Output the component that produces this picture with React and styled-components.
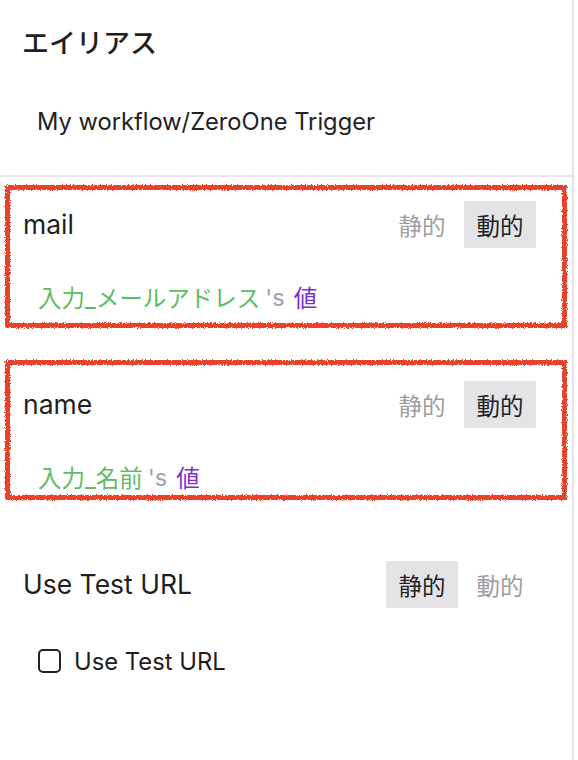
import styled, { createGlobalStyle } from 'styled-components';

// Global page reset
const GlobalStyle = createGlobalStyle`
    html, body {
        margin: 0;
        padding: 0;
        background: #ffffff;
    }
    body {
        font-family: Inter, "Noto Sans CJK JP", "Noto Sans", sans-serif;
        color: #1f1f22;
    }
`;

// Styled components
const Panel = styled.div`
    width: 572px;
    min-height: 760px;
    border-right: 2px solid #e4e4e8;
    box-sizing: content-box;
    display: flex;
    flex-direction: column;
`;

const AliasSection = styled.section`
    height: 177px;
    box-sizing: border-box;
    border-bottom: 2px solid #e6e6ea;
    padding: 24px 0 0 22px;
    display: flex;
    flex-direction: column;
`;

const Heading = styled.h2`
    margin: 0;
    font-size: 27px;
    font-weight: 500;
    line-height: 40px;
    color: #1f1f22;
`;

const AliasValue = styled.div`
    margin: 38px 0 0 15px;
    font-size: 23.7px;
    line-height: 40px;
    color: #222225;
`;

const Field = styled.section`
    position: relative;
    padding: 24px 36px 0 23px;
    height: 180px;
    box-sizing: border-box;
`;

const HeaderRow = styled.div`
    display: flex;
    align-items: center;
    justify-content: space-between;
    height: 47px;
`;

const Label = styled.div`
    font-size: 26.5px;
    line-height: 47px;
    color: #1f1f22;
`;

const Toggle = styled.div`
    display: flex;
    gap: 6px;
`;

const ToggleButton = styled.div`
    width: 72px;
    height: 47px;
    display: flex;
    align-items: center;
    justify-content: center;
    font-size: 23.5px;
    background: ${({ $active }) => ($active ? '#e4e4e7' : 'transparent')};
    color: ${({ $active }) => ($active ? '#222225' : '#9d9da3')};
`;

const ValueRow = styled.div`
    margin: ${({ $gap }) => $gap}px 0 0 15px;
    height: 36px;
    display: flex;
    align-items: center;
    font-size: 23.5px;
`;

const Variable = styled.span`
    color: #5dbd66;
`;

const Possessive = styled.span`
    color: #9ea2b0;
    margin: 0 9px 0 5px;
`;

const Prop = styled.span`
    color: #7a2fd0;
`;

const CheckLabel = styled.label`
    display: flex;
    align-items: center;
    gap: 13px;
    font-size: 23.8px;
    color: #1f1f22;
`;

const CheckBox = styled.span`
    width: 19px;
    height: 20px;
    border: 2px solid #222225;
    border-radius: 5px;
`;

// hand-drawn annotation over a field
const Marker = styled.div`
    position: absolute;
    left: 5px;
    right: 5px;
    top: ${({ $top }) => $top}px;
    height: ${({ $height }) => $height}px;
    border: 5px solid #e9432b;
    box-sizing: border-box;
    filter: url(#rough);
    pointer-events: none;
`;

function ModeToggle({ dynamic }) {
    return (
        <Toggle>
            <ToggleButton $active={!dynamic}>静的</ToggleButton>
            <ToggleButton $active={dynamic}>動的</ToggleButton>
        </Toggle>
    );
}

function App() {
    return (
        <>
            <GlobalStyle />
            <svg width="0" height="0" style={{ position: 'absolute' }}>
                <filter id="rough">
                    <feTurbulence type="fractalNoise" baseFrequency="0.8" numOctaves="2" result="n" />
                    <feDisplacementMap in="SourceGraphic" in2="n" scale="4" />
                </filter>
            </svg>
            <Panel>
                <AliasSection>
                    <Heading>エイリアス</Heading>
                    <AliasValue>My workflow/ZeroOne Trigger</AliasValue>
                </AliasSection>

                <Field>
                    <HeaderRow>
                        <Label>mail</Label>
                        <ModeToggle dynamic />
                    </HeaderRow>
                    <ValueRow $gap={31}>
                        <Variable>入力_メールアドレス</Variable>
                        <Possessive>'s</Possessive>
                        <Prop>値</Prop>
                    </ValueRow>
                    <Marker $top={8} $height={143} />
                </Field>

                <Field>
                    <HeaderRow>
                        <Label>name</Label>
                        <ModeToggle dynamic />
                    </HeaderRow>
                    <ValueRow $gap={31}>
                        <Variable>入力_名前</Variable>
                        <Possessive>'s</Possessive>
                        <Prop>値</Prop>
                    </ValueRow>
                    <Marker $top={3} $height={140} />
                </Field>

                <Field>
                    <HeaderRow>
                        <Label>Use Test URL</Label>
                        <ModeToggle />
                    </HeaderRow>
                    <ValueRow $gap={35}>
                        <CheckLabel>
                            <CheckBox />
                            Use Test URL
                        </CheckLabel>
                    </ValueRow>
                </Field>
            </Panel>
        </>
    );
}

export default App;
